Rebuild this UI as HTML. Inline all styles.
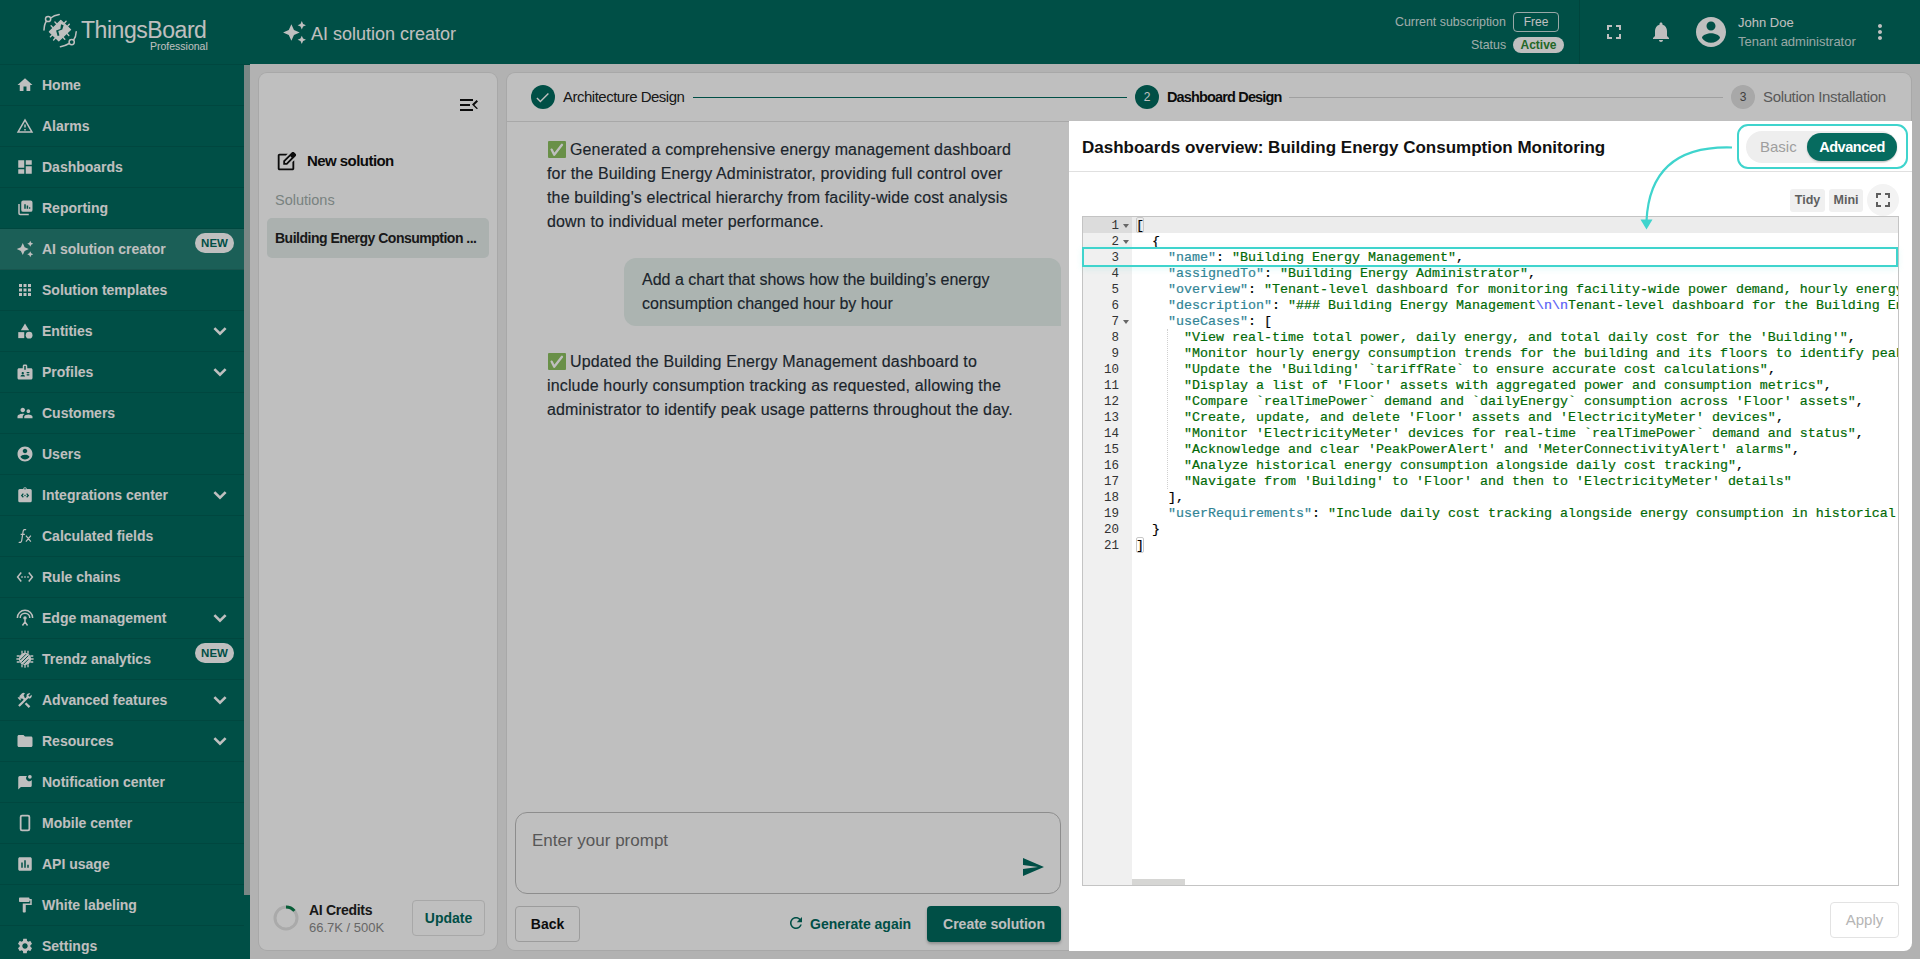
<!DOCTYPE html>
<html><head><meta charset="utf-8">
<style>
*{box-sizing:border-box;margin:0;padding:0}
html,body{width:1920px;height:959px;overflow:hidden}
body{position:relative;background:#eeeeee;font-family:"Liberation Sans",sans-serif;color:rgba(0,0,0,.87)}
.abs{position:absolute}
svg{display:block}
/* header */
#hdr{position:absolute;left:0;top:0;width:1920px;height:64px;background:#016a5e}
#side{position:absolute;left:0;top:64px;width:250px;height:895px;background:#016a5e;border-top:1px solid rgba(0,0,0,.1)}
.nav{position:absolute;left:0;width:244px;height:41px;border-bottom:1px solid rgba(0,0,0,.1);color:#fff}
.nav .ic{position:absolute;left:16px;top:10.5px;width:18px;height:18px}
.nav .tx{position:absolute;left:42px;top:0;line-height:41px;font-size:14px;font-weight:700;white-space:nowrap}
.nav .chev{position:absolute;left:207px;top:7px;width:26px;height:26px}
.nav.act{background:rgba(255,255,255,.14)}
.badge{position:absolute;left:195px;top:4px;width:39px;height:20px;border-radius:10px;background:#fff;color:#016a5e;font-size:11.5px;font-weight:700;text-align:center;line-height:20px}
#sbar{position:absolute;left:244px;top:65px;width:6px;height:830px;background:#a3b5b2}
.msg{font-size:16px;line-height:24px;color:#27313a;-webkit-text-stroke:.15px #27313a;white-space:nowrap;letter-spacing:.15px;margin-top:1px}
.cl{position:absolute;left:4px;margin-top:1px;height:16px;line-height:16px;font-family:"Liberation Mono",monospace;font-size:13.33px;-webkit-text-stroke:.2px;white-space:pre;color:#000}
.ck{color:#318495}.cs{color:#036a07}.ce{color:#585cf6}
.gl{position:absolute;left:0;margin-top:1px;width:36px;height:16px;line-height:16px;font-family:"Liberation Mono",monospace;font-size:12.5px;text-align:right;color:#333}
.fw{position:absolute;left:40px;top:6px;width:0;height:0;border-left:3px solid transparent;border-right:3px solid transparent;border-top:4px solid #666}
.card{position:absolute;background:#fff;box-shadow:0 0 0 1px #e0e0e0;border-radius:8px}
</style></head>
<body>
<div id="hdr">
<svg class="abs" style="left:40px;top:10px;width:40px;height:40px" viewBox="0 0 40 40" fill="none" stroke="#fff" stroke-width="1.5" stroke-linecap="round">
 <path d="M4 20Q4.3 14 6.3 11.2"/><circle cx="8.1" cy="9" r="2.6"/><path d="M10.7 8Q14 5.5 19.2 4.6"/>
 <path d="M36.2 21.7Q36 27 33.6 30"/><circle cx="31.7" cy="32.1" r="2.6"/><path d="M29.2 33.5Q25 36 20.4 36.7"/>
 <path d="M20.8 10.4L30.6 19.6 18.8 30.8 9.4 21.7z" fill="#fff" stroke-width="1.2" stroke-linejoin="round"/>
 <path d="M24.1 13.5l2-2.2M27.3 16.5l2-2.2M13.2 17.9l-2.1-2.1M17 14.2l-2.1-2.1M12.5 24.7l-2.1 2.1M15.7 27.8l-2.1 2.1M22.7 27.1l2.1 2.1M26.7 23.3l2.1 2.1" stroke-width="1.4"/>
 <path d="M21 14.3l2.6 1-1.3 4.3-4 1.5 1.1 4.4-1.8.6-1.5-5.6 4.3-1.6z" fill="#016a5e" stroke="none"/>
</svg>
<span class="abs" style="left:81px;top:14.5px;font-size:23px;letter-spacing:-.45px;color:#fff;white-space:nowrap;line-height:30px">ThingsBoard</span>
<span class="abs" style="left:150px;top:39px;font-size:10.5px;color:#fff;white-space:nowrap;line-height:14px">Professional</span>
<svg class="abs" style="left:282px;top:20px;width:25px;height:25px" viewBox="0 0 24 24" fill="#fff"><path d="M19 9l1.25-2.75L23 5l-2.75-1.25L19 1l-1.25 2.75L15 5l2.75 1.25L19 9zm-7.5.5L9 4 6.5 9.5 1 12l5.5 2.5L9 20l2.5-5.5L17 12l-5.5-2.5zM19 15l-1.25 2.75L15 19l2.75 1.25L19 23l1.25-2.75L23 19l-2.75-1.25L19 15z"/></svg>
<span class="abs" style="left:311px;top:21.5px;font-size:18px;color:#fff;white-space:nowrap;line-height:24px">AI solution creator</span>
<span class="abs" style="left:1395px;top:14.5px;font-size:12.4px;color:rgba(255,255,255,.85);white-space:nowrap;line-height:14px">Current subscription</span>
<span class="abs" style="left:1513px;top:12px;width:46px;height:20px;border:1px solid rgba(255,255,255,.8);border-radius:4px;font-size:12px;color:#fff;text-align:center;line-height:18px">Free</span>
<span class="abs" style="left:1471px;top:37.5px;font-size:12.4px;color:rgba(255,255,255,.85);white-space:nowrap;line-height:14px">Status</span>
<span class="abs" style="left:1513px;top:37px;width:51px;height:16px;background:#fff;border-radius:8px;font-size:12px;font-weight:700;color:#2f8a35;text-align:center;line-height:16px">Active</span>
<div class="abs" style="left:1579px;top:0;width:1px;height:64px;background:rgba(0,0,0,.12)"></div>
<svg class="abs" style="left:1602px;top:20px;width:24px;height:24px" viewBox="0 0 24 24" fill="#fff"><path d="M7 14H5v5h5v-2H7v-3zm-2-4h2V7h3V5H5v5zm12 7h-3v2h5v-5h-2v3zM14 5v2h3v3h2V5h-5z"/></svg>
<svg class="abs" style="left:1649px;top:20px;width:24px;height:24px" viewBox="0 0 24 24" fill="#fff"><path d="M12 22c1.1 0 2-.9 2-2h-4c0 1.1.89 2 2 2zm6-6v-5c0-3.07-1.64-5.64-4.5-6.32V4c0-.83-.67-1.5-1.5-1.5s-1.5.67-1.5 1.5v.68C7.63 5.36 6 7.92 6 11v5l-2 2v1h16v-1l-2-2z"/></svg>
<svg class="abs" style="left:1693px;top:14px;width:36px;height:36px" viewBox="0 0 24 24" fill="#fff"><path d="M12 2C6.48 2 2 6.48 2 12s4.48 10 10 10 10-4.48 10-10S17.52 2 12 2zm0 3c1.66 0 3 1.34 3 3s-1.34 3-3 3-3-1.34-3-3 1.34-3 3-3zm0 14.2c-2.5 0-4.71-1.28-6-3.22.03-1.99 4-3.08 6-3.08 1.99 0 5.97 1.09 6 3.08-1.29 1.94-3.5 3.22-6 3.22z"/></svg>
<span class="abs" style="left:1738px;top:15px;font-size:13px;color:#fff;white-space:nowrap;line-height:16px">John Doe</span>
<span class="abs" style="left:1738px;top:34px;font-size:13px;color:rgba(255,255,255,.8);white-space:nowrap;line-height:16px">Tenant administrator</span>
<svg class="abs" style="left:1868px;top:20px;width:24px;height:24px" viewBox="0 0 24 24" fill="#fff"><path d="M12 8c1.1 0 2-.9 2-2s-.9-2-2-2-2 .9-2 2 .9 2 2 2zm0 2c-1.1 0-2 .9-2 2s.9 2 2 2 2-.9 2-2-.9-2-2-2zm0 6c-1.1 0-2 .9-2 2s.9 2 2 2 2-.9 2-2-.9-2-2-2z"/></svg>
</div>
<div id="side">
<div class="nav" style="top:0px"><svg class="ic" viewBox="0 0 24 24" fill="#fff"><path d="M10 20v-6h4v6h5v-8h3L12 3 2 12h3v8z"/></svg><span class="tx">Home</span></div>
<div class="nav" style="top:41px"><svg class="ic" viewBox="0 0 24 24" fill="#fff"><path d="M12 5.99L19.53 19H4.47L12 5.99M12 2L1 21h22L12 2zm1 14h-2v2h2v-2zm0-6h-2v4h2v-4z"/></svg><span class="tx">Alarms</span></div>
<div class="nav" style="top:82px"><svg class="ic" viewBox="0 0 24 24" fill="#fff"><path d="M3 13h8V3H3v10zm0 8h8v-6H3v6zm10 0h8V11h-8v10zm0-18v6h8V3h-8z"/></svg><span class="tx">Dashboards</span></div>
<div class="nav" style="top:123px"><svg class="ic" viewBox="0 0 24 24" fill="#fff"><path fill-rule="evenodd" d="M9.5 2h10A2.5 2.5 0 0 1 22 4.5v10a2.5 2.5 0 0 1-2.5 2.5h-10A2.5 2.5 0 0 1 7 14.5v-10A2.5 2.5 0 0 1 9.5 2zM11 7v6h2V7zm3.2 1.5V13h2V8.5zm3.2 2.5v2h1.6v-2z"/><path d="M4 6.5V19a1.5 1.5 0 0 0 1.5 1.5H17" fill="none" stroke="#fff" stroke-width="2"/></svg><span class="tx">Reporting</span></div>
<div class="nav act" style="top:164px"><svg class="ic" viewBox="0 0 24 24" fill="#fff"><path d="M19 9l1.25-2.75L23 5l-2.75-1.25L19 1l-1.25 2.75L15 5l2.75 1.25L19 9zm-7.5.5L9 4 6.5 9.5 1 12l5.5 2.5L9 20l2.5-5.5L17 12l-5.5-2.5zM19 15l-1.25 2.75L15 19l2.75 1.25L19 23l1.25-2.75L23 19l-2.75-1.25L19 15z"/></svg><span class="tx">AI solution creator</span><span class="badge">NEW</span></div>
<div class="nav" style="top:205px"><svg class="ic" viewBox="0 0 24 24" fill="#fff"><path d="M4 8h4V4H4v4zm6 12h4v-4h-4v4zm-6 0h4v-4H4v4zm0-6h4v-4H4v4zm6 0h4v-4h-4v4zm6-10v4h4V4h-4zm-6 4h4V4h-4v4zm6 6h4v-4h-4v4zm0 6h4v-4h-4v4z"/></svg><span class="tx">Solution templates</span></div>
<div class="nav" style="top:246px"><svg class="ic" viewBox="0 0 24 24" fill="#fff"><path d="M12 2l-5.5 9h11z"/><circle cx="17.5" cy="17.5" r="4.5"/><path d="M3 13.5h8v8H3z"/></svg><span class="tx">Entities</span><svg class="chev" viewBox="0 0 24 24"><path d="M6.8 9.3L12 14.5l5.2-5.2" fill="none" stroke="#fff" stroke-width="2.4"/></svg></div>
<div class="nav" style="top:287px"><svg class="ic" viewBox="0 0 24 24" fill="#fff"><path d="M20 7h-5V4c0-1.1-.9-2-2-2h-2c-1.1 0-2 .9-2 2v3H4c-1.1 0-2 .9-2 2v11c0 1.1.9 2 2 2h16c1.1 0 2-.9 2-2V9c0-1.1-.9-2-2-2zM9 12c.83 0 1.5.67 1.5 1.5S9.83 15 9 15s-1.5-.67-1.5-1.5S8.17 12 9 12zm3 6H6v-.43c0-.6.36-1.15.92-1.39.64-.28 1.34-.43 2.08-.43s1.44.15 2.08.43c.55.24.92.78.92 1.39V18zm1-9h-2V4h2v5zm4.25 7.5h-2.5c-.41 0-.75-.34-.75-.75s.34-.75.75-.75h2.5c.41 0 .75.34.75.75s-.34.75-.75.75zm0-3h-2.5c-.41 0-.75-.34-.75-.75s.34-.75.75-.75h2.5c.41 0 .75.34.75.75s-.34.75-.75.75z"/></svg><span class="tx">Profiles</span><svg class="chev" viewBox="0 0 24 24"><path d="M6.8 9.3L12 14.5l5.2-5.2" fill="none" stroke="#fff" stroke-width="2.4"/></svg></div>
<div class="nav" style="top:328px"><svg class="ic" viewBox="0 0 24 24" fill="#fff"><path d="M16.5 12c1.38 0 2.49-1.12 2.49-2.5S17.88 7 16.5 7C15.12 7 14 8.12 14 9.5s1.12 2.5 2.5 2.5zM9 11c1.66 0 2.99-1.34 2.99-3S10.66 5 9 5C7.34 5 6 6.34 6 8s1.34 3 3 3zm7.5 3c-1.83 0-5.5.92-5.5 2.75V19h11v-2.25c0-1.83-3.67-2.750-5.5-2.75zM9 13c-2.33 0-7 1.17-7 3.5V19h7v-2.25c0-.85.33-2.34 2.37-3.47C10.5 13.1 9.66 13 9 13z"/></svg><span class="tx">Customers</span></div>
<div class="nav" style="top:369px"><svg class="ic" viewBox="0 0 24 24" fill="#fff"><path d="M12 2C6.48 2 2 6.48 2 12s4.48 10 10 10 10-4.48 10-10S17.52 2 12 2zm0 3c1.66 0 3 1.34 3 3s-1.34 3-3 3-3-1.34-3-3 1.34-3 3-3zm0 14.2c-2.5 0-4.71-1.28-6-3.22.03-1.99 4-3.08 6-3.08 1.99 0 5.97 1.09 6 3.08-1.29 1.94-3.5 3.22-6 3.22z"/></svg><span class="tx">Users</span></div>
<div class="nav" style="top:410px"><svg class="ic" viewBox="0 0 24 24" fill="#fff"><path d="M5 4h4.6a2.4 2.4 0 0 1 4.8 0H19a2 2 0 0 1 2 2v13.5a2 2 0 0 1-2 2H5a2 2 0 0 1-2-2V6a2 2 0 0 1 2-2z"/><path d="M9.8 10.2L7.6 12.6l2.2 2.4M14.2 10.2l2.2 2.4-2.2 2.4" fill="none" stroke="#016a5e" stroke-width="1.7"/><circle cx="12" cy="12.6" r=".9" fill="#016a5e"/><circle cx="12" cy="3.6" r="1" fill="#016a5e"/></svg><span class="tx">Integrations center</span><svg class="chev" viewBox="0 0 24 24"><path d="M6.8 9.3L12 14.5l5.2-5.2" fill="none" stroke="#fff" stroke-width="2.4"/></svg></div>
<div class="nav" style="top:451px"><svg class="ic" viewBox="0 0 24 24" fill="#fff"><path d="M13.5 3.8c-1.6-.9-3.6-.4-4 2L7.6 18.2c-.4 2.4-2.4 2.9-4 2M6.2 9.8h5.6M13.2 11.5l6.6 8M19.8 11.5l-6.6 8" fill="none" stroke="#fff" stroke-width="1.6"/></svg><span class="tx">Calculated fields</span></div>
<div class="nav" style="top:492px"><svg class="ic" viewBox="0 0 24 24" fill="#fff"><path d="M7.77 6.76L6.23 5.48.82 12l5.41 6.52 1.54-1.28L3.42 12l4.35-5.24zM7 13h2v-2H7v2zm10-2h-2v2h2v-2zm-6 2h2v-2h-2v2zm6.77-7.52l-1.54 1.28L20.58 12l-4.35 5.24 1.54 1.28L23.18 12l-5.41-6.52z"/></svg><span class="tx">Rule chains</span></div>
<div class="nav" style="top:533px"><svg class="ic" viewBox="0 0 24 24" fill="#fff"><path d="M1.8 12A10.2 10.2 0 0 1 22.2 12M5.6 12A6.4 6.4 0 0 1 18.4 12M12 13.5V17.2M12 17.2L8.6 22M12 17.2l3.4 4.8" fill="none" stroke="#fff" stroke-width="2"/><circle cx="12" cy="12" r="2.3"/></svg><span class="tx">Edge management</span><svg class="chev" viewBox="0 0 24 24"><path d="M6.8 9.3L12 14.5l5.2-5.2" fill="none" stroke="#fff" stroke-width="2.4"/></svg></div>
<div class="nav" style="top:574px"><svg class="ic" viewBox="0 0 24 24" fill="#fff"><circle cx="12" cy="12" r="8.2"/><path d="M8 1v4M12 .5v4M16 1v4M8 19v4M12 19.5v4M16 19v4M1 8h4M.5 12h4M1 16h4M19 8h4M19.5 12h4M19 16h4" fill="none" stroke="#fff" stroke-width="1.8"/><path d="M5.5 13.5l8-8M7.5 16.5l9-9M10 19l6.5-6.5" fill="none" stroke="#016a5e" stroke-width="1.3"/></svg><span class="tx">Trendz analytics</span><span class="badge">NEW</span></div>
<div class="nav" style="top:615px"><svg class="ic" viewBox="0 0 24 24" fill="#fff"><path d="M13.78 15.17l-2.12 2.12 5.3 5.3 2.12-2.12zM17.5 10c1.93 0 3.5-1.57 3.5-3.5 0-.58-.16-1.12-.41-1.6l-2.7 2.7-1.49-1.49 2.7-2.7c-.48-.25-1.02-.41-1.6-.41C15.57 3 14 4.57 14 6.5c0 .41.08.8.21 1.16l-1.85 1.85-1.78-1.78.71-.71-1.41-1.41L12 3.49a3 3 0 0 0-4.24 0L4.22 7.03l1.41 1.41H2.81l-.71.71 3.54 3.54.71-.71V9.15l1.41 1.41.71-.71 1.78 1.78-7.41 7.41 2.12 2.12L16.34 9.79c.36.13.75.21 1.16.21z"/></svg><span class="tx">Advanced features</span><svg class="chev" viewBox="0 0 24 24"><path d="M6.8 9.3L12 14.5l5.2-5.2" fill="none" stroke="#fff" stroke-width="2.4"/></svg></div>
<div class="nav" style="top:656px"><svg class="ic" viewBox="0 0 24 24" fill="#fff"><path d="M10 4H4c-1.1 0-1.99.9-1.99 2L2 18c0 1.1.9 2 2 2h16c1.1 0 2-.9 2-2V8c0-1.1-.9-2-2-2h-8l-2-2z"/></svg><span class="tx">Resources</span><svg class="chev" viewBox="0 0 24 24"><path d="M6.8 9.3L12 14.5l5.2-5.2" fill="none" stroke="#fff" stroke-width="2.4"/></svg></div>
<div class="nav" style="top:697px"><svg class="ic" viewBox="0 0 24 24" fill="#fff"><path d="M18.5 2.5a2.5 2.5 0 1 1 0 5 2.5 2.5 0 0 1 0-5zM14.6 4H5a2 2 0 0 0-2 2v16l3.5-3.5H19a2 2 0 0 0 2-2V9.4A4 4 0 0 1 14.6 4z"/></svg><span class="tx">Notification center</span></div>
<div class="nav" style="top:738px"><svg class="ic" viewBox="0 0 24 24" fill="#fff"><rect x="6.2" y="2.2" width="11.6" height="19.6" rx="1.8" fill="none" stroke="#fff" stroke-width="2.4"/></svg><span class="tx">Mobile center</span></div>
<div class="nav" style="top:779px"><svg class="ic" viewBox="0 0 24 24" fill="#fff"><path d="M19 3H5c-1.1 0-2 .9-2 2v14c0 1.1.9 2 2 2h14c1.1 0 2-.9 2-2V5c0-1.1-.9-2-2-2zM9 17H7v-7h2v7zm4 0h-2V7h2v10zm4 0h-2v-4h2v4z"/></svg><span class="tx">API usage</span></div>
<div class="nav" style="top:820px"><svg class="ic" viewBox="0 0 24 24" fill="#fff"><path d="M18 4V3c0-.55-.45-1-1-1H5c-.55 0-1 .45-1 1v4c0 .55.45 1 1 1h12c.55 0 1-.45 1-1V6h1v4H9v11c0 .55.45 1 1 1h2c.55 0 1-.45 1-1v-9h8V4h-3z"/></svg><span class="tx">White labeling</span></div>
<div class="nav" style="top:861px"><svg class="ic" viewBox="0 0 24 24" fill="#fff"><path d="M19.14 12.94c.04-.3.06-.61.06-.94 0-.32-.02-.64-.07-.94l2.03-1.58c.18-.14.23-.41.12-.61l-1.92-3.32c-.12-.22-.37-.29-.59-.22l-2.39.96c-.5-.38-1.03-.7-1.62-.94l-.36-2.54c-.04-.24-.24-.41-.48-.41h-3.84c-.24 0-.43.17-.47.41l-.36 2.54c-.59.24-1.13.57-1.62.94l-2.39-.96c-.22-.08-.47 0-.59.22L2.74 8.87c-.12.21-.08.47.12.61l2.03 1.58c-.05.3-.09.63-.09.94s.02.64.07.94l-2.03 1.58c-.18.14-.23.41-.12.61l1.92 3.32c.12.22.37.29.59.22l2.39-.96c.5.38 1.03.7 1.62.94l.36 2.54c.05.24.24.41.48.41h3.84c.24 0 .44-.17.47-.41l.36-2.54c.59-.24 1.13-.56 1.62-.94l2.39.96c.22.08.47 0 .59-.22l1.92-3.32c.12-.22.07-.47-.12-.61l-2.01-1.58zM12 15.6c-1.98 0-3.6-1.62-3.6-3.6s1.62-3.6 3.6-3.6 3.6 1.62 3.6 3.6-1.62 3.6-3.6 3.6z"/></svg><span class="tx">Settings</span></div>
</div>
<div id="sbar"></div>

<div class="card" id="leftcard" style="left:259px;top:73px;width:238px;height:877px">
<svg class="abs" style="left:198px;top:20px;width:24px;height:24px" viewBox="0 0 24 24" fill="#111"><path d="M3 18h13v-2H3v2zm0-5h10v-2H3v2zm0-7v2h13V6H3zm18 9.59L17.42 12 21 8.41 19.59 7 15 11.59 19.59 16 21 15.59z"/></svg>
<svg class="abs" style="left:16px;top:78px;width:22px;height:22px" viewBox="0 0 24 24" fill="#111"><path d="M5 21q-.83 0-1.41-.59T3 19V5q0-.83.59-1.41T5 3h8.92l-2 2H5v14h14v-6.95l2-2V19q0 .83-.59 1.41T19 21H5zm4-6v-4.25l9.18-9.18q.3-.3.68-.45t.75-.15q.4 0 .76.15t.66.45L22.43 3q.28.3.43.66T23 4.4q0 .38-.14.74t-.44.66L13.25 15H9zm2-2h1.4l5.8-5.8-.7-.7-.73-.7L11 11.58V13z"/></svg>
<span class="abs" style="left:48px;top:79px;font-size:15px;font-weight:700;letter-spacing:-.55px;line-height:18px;color:#111;white-space:nowrap">New solution</span>
<span class="abs" style="left:16px;top:118px;font-size:14.5px;line-height:18px;color:#a2aeab;white-space:nowrap">Solutions</span>
<div class="abs" style="left:8px;top:145px;width:222px;height:40px;border-radius:5px;background:#e4ecea"></div>
<span class="abs" style="left:16px;top:156px;font-size:14px;font-weight:700;letter-spacing:-.5px;line-height:18px;color:#222;white-space:nowrap">Building Energy Consumption ...</span>
<svg class="abs" style="left:14px;top:832px;width:26px;height:26px" viewBox="0 0 26 26"><circle cx="13" cy="13" r="11" fill="none" stroke="#e3e3e3" stroke-width="3"/><path d="M13 2a11 11 0 0 1 8.4 3.9" fill="none" stroke="#0a7d4a" stroke-width="3"/></svg>
<span class="abs" style="left:50px;top:829px;font-size:14px;font-weight:700;letter-spacing:-.3px;line-height:16px;color:#222;white-space:nowrap">AI Credits</span>
<span class="abs" style="left:50px;top:847px;font-size:13px;line-height:16px;color:#8a8a8a;white-space:nowrap">66.7K / 500K</span>
<div class="abs" style="left:153px;top:827px;width:73px;height:36px;border:1px solid #e0e0e0;border-radius:4px;font-size:14px;font-weight:700;color:#016a5e;text-align:center;line-height:34px">Update</div>
</div>
<div class="card" id="rightcard" style="left:507px;top:73px;width:1404px;height:877px;overflow:hidden">
<div class="abs" style="left:0;top:0;width:1404px;height:49px;border-bottom:1px solid #e0e0e0"></div>
<div class="abs" style="left:24px;top:12px;width:24px;height:24px;border-radius:50%;background:#016a5e"></div>
<svg class="abs" style="left:27px;top:16px;width:17px;height:17px" viewBox="0 0 24 24" fill="#fff"><path d="M9 16.17L4.83 12l-1.42 1.41L9 19 21 7l-1.41-1.41z"/></svg>
<span class="abs" style="left:56px;top:15px;font-size:15px;letter-spacing:-.5px;line-height:18px;color:#222;white-space:nowrap">Architecture Design</span>
<div class="abs" style="left:186px;top:24px;width:434px;height:1px;background:#016a5e"></div>
<div class="abs" style="left:628px;top:12px;width:24px;height:24px;border-radius:50%;background:#016a5e;color:#fff;font-size:12px;text-align:center;line-height:24px">2</div>
<span class="abs" style="left:660px;top:15px;font-size:14.5px;font-weight:700;letter-spacing:-.85px;line-height:18px;color:#111;white-space:nowrap">Dashboard Design</span>
<div class="abs" style="left:782px;top:24px;width:434px;height:1px;background:#d6d6d6"></div>
<div class="abs" style="left:1224px;top:12px;width:24px;height:24px;border-radius:50%;background:#e0e0e0;color:#555;font-size:12px;text-align:center;line-height:24px">3</div>
<span class="abs" style="left:1256px;top:15px;font-size:15px;letter-spacing:-.35px;line-height:18px;color:#777;white-space:nowrap">Solution Installation</span>

<svg class="abs" style="left:41px;top:68px;width:18px;height:17px" viewBox="0 0 18 17"><rect width="18" height="17" rx="1" fill="#8cc061"/><path d="M3.6 8.6l2.6 5.2 7.8-10" fill="none" stroke="#fff" stroke-width="2.3" stroke-linecap="round" stroke-linejoin="round"/></svg>
<div class="abs msg" style="left:40px;top:64px;width:480px">&nbsp;&nbsp;&nbsp;&nbsp;&nbsp;Generated a comprehensive energy management dashboard<br>for the Building Energy Administrator, providing full control over<br>the building's electrical hierarchy from facility-wide cost analysis<br>down to individual meter performance.</div>
<div class="abs" style="left:117px;top:185px;width:437px;height:68px;border-radius:12px 12px 0 12px;background:#e6f0ed"></div>
<div class="abs msg" style="left:135px;top:194px;width:420px;letter-spacing:0">Add a chart that shows how the building’s energy<br>consumption changed hour by hour</div>
<svg class="abs" style="left:41px;top:280px;width:18px;height:17px" viewBox="0 0 18 17"><rect width="18" height="17" rx="1" fill="#8cc061"/><path d="M3.6 8.6l2.6 5.2 7.8-10" fill="none" stroke="#fff" stroke-width="2.3" stroke-linecap="round" stroke-linejoin="round"/></svg>
<div class="abs msg" style="left:40px;top:276px;width:500px">&nbsp;&nbsp;&nbsp;&nbsp;&nbsp;Updated the Building Energy Management dashboard to<br>include hourly consumption tracking as requested, allowing the<br>administrator to identify peak usage patterns throughout the day.</div>

<div class="abs" style="left:8px;top:739px;width:546px;height:82px;border:1px solid #bdbdbd;border-radius:12px"></div>
<span class="abs" style="left:25px;top:758px;font-size:17px;line-height:20px;color:#757575;white-space:nowrap">Enter your prompt</span>
<svg class="abs" style="left:514px;top:782px;width:24px;height:24px" viewBox="0 0 24 24" fill="#016a5e"><path d="M2.01 21L23 12 2.01 3 2 10l15 2-15 2z"/></svg>
<div class="abs" style="left:8px;top:833px;width:65px;height:36px;border:1px solid #d0d0d0;border-radius:4px;font-size:14px;font-weight:700;color:#111;text-align:center;line-height:34px">Back</div>
<svg class="abs" style="left:280px;top:841px;width:18px;height:18px" viewBox="0 0 24 24" fill="#016a5e"><path d="M17.65 6.35C16.2 4.9 14.21 4 12 4c-4.42 0-7.99 3.58-7.99 8s3.57 8 7.99 8c3.73 0 6.84-2.55 7.73-6h-2.08c-.82 2.33-3.04 4-5.65 4-3.31 0-6-2.69-6-6s2.69-6 6-6c1.66 0 3.14.69 4.22 1.78L13 11h7V4l-2.35 2.35z"/></svg>
<span class="abs" style="left:303px;top:842px;font-size:14px;font-weight:700;line-height:18px;color:#016a5e;white-space:nowrap">Generate again</span>
<div class="abs" style="left:420px;top:833px;width:134px;height:36px;border-radius:4px;background:#016a5e;box-shadow:0 2px 3px rgba(0,0,0,.25);font-size:14px;font-weight:700;color:#fff;text-align:center;line-height:36px">Create solution</div>
</div>

<div class="abs" id="rpanel" style="left:1069px;top:121px;width:843px;height:830px;background:#fff;border-radius:0 0 8px 0;overflow:hidden">
<span class="abs" style="left:13px;top:17px;font-size:17px;font-weight:700;line-height:20px;color:#111;white-space:nowrap">Dashboards overview: Building Energy Consumption Monitoring</span>
<div class="abs" style="left:677px;top:10px;width:151px;height:32px;border-radius:16px;background:#eeeeee"></div>
<span class="abs" style="left:691px;top:17px;font-size:15px;line-height:18px;color:#9e9e9e;white-space:nowrap">Basic</span>
<div class="abs" style="left:738px;top:12px;width:90px;height:28px;border-radius:14px;background:#066b5f;box-shadow:0 1px 2px rgba(0,0,0,.2);font-size:14.5px;font-weight:700;color:#fff;text-align:center;line-height:28px;letter-spacing:-.45px">Advanced</div>
<div class="abs" style="left:0;top:50px;width:843px;height:1px;background:#e0e0e0"></div>
<div class="abs" style="left:721px;top:68px;width:35px;height:23px;border-radius:3px;background:#f0f0f0;font-size:12.5px;font-weight:700;color:#5f5f5f;text-align:center;line-height:23px">Tidy</div>
<div class="abs" style="left:760px;top:68px;width:34px;height:23px;border-radius:3px;background:#f0f0f0;font-size:12.5px;font-weight:700;color:#5f5f5f;text-align:center;line-height:23px">Mini</div>
<div class="abs" style="left:798px;top:63px;width:32px;height:32px;border-radius:50%;background:#f3f3f3"></div>
<svg class="abs" style="left:802px;top:67px;width:24px;height:24px" viewBox="0 0 24 24" fill="#5f5f5f"><path d="M7 14H5v5h5v-2H7v-3zm-2-4h2V7h3V5H5v5zm12 7h-3v2h5v-5h-2v3zM14 5v2h3v3h2V5h-5z"/></svg>
<div class="abs" id="editor" style="left:13px;top:95px;width:817px;height:670px;border:1px solid #c4c4c4;overflow:hidden">
 <div class="abs" style="left:0;top:0;width:49px;height:668px;background:#f0f0f0"></div>
 <div class="abs" style="left:0;top:0;width:49px;height:16px;background:#dcdcdc"></div>
 <div class="abs" style="left:49px;top:0;width:770px;height:16px;background:#ececec"></div>
 <div class="abs" style="left:52.5px;top:0;width:8px;height:16px;border:1px solid #c8c8c8;border-radius:2px"></div><div class="abs" style="left:52.5px;top:320px;width:8px;height:16px;border:1px solid #c8c8c8;border-radius:2px;z-index:2"></div>
 <div class="abs" style="left:84px;top:112px;width:0;height:160px;border-left:1px dotted #d0d0d0"></div>
 <div class="gl" style="top:0px">1<span class="fw"></span></div><div class="gl" style="top:16px">2<span class="fw"></span></div><div class="gl" style="top:32px">3</div><div class="gl" style="top:48px">4</div><div class="gl" style="top:64px">5</div><div class="gl" style="top:80px">6</div><div class="gl" style="top:96px">7<span class="fw"></span></div><div class="gl" style="top:112px">8</div><div class="gl" style="top:128px">9</div><div class="gl" style="top:144px">10</div><div class="gl" style="top:160px">11</div><div class="gl" style="top:176px">12</div><div class="gl" style="top:192px">13</div><div class="gl" style="top:208px">14</div><div class="gl" style="top:224px">15</div><div class="gl" style="top:240px">16</div><div class="gl" style="top:256px">17</div><div class="gl" style="top:272px">18</div><div class="gl" style="top:288px">19</div><div class="gl" style="top:304px">20</div><div class="gl" style="top:320px">21</div>
 <div class="abs" style="left:49px;top:0;width:768px;height:400px;overflow:hidden"><div class="cl" style="top:0px">[</div><div class="cl" style="top:16px">  {</div><div class="cl" style="top:32px">    <span class="ck">"name"</span>: <span class="cs">"Building Energy Management"</span>,</div><div class="cl" style="top:48px">    <span class="ck">"assignedTo"</span>: <span class="cs">"Building Energy Administrator"</span>,</div><div class="cl" style="top:64px">    <span class="ck">"overview"</span>: <span class="cs">"Tenant-level dashboard for monitoring facility-wide power demand, hourly energy consumption, and daily costs"</span>,</div><div class="cl" style="top:80px">    <span class="ck">"description"</span>: <span class="cs">"### Building Energy Management</span><span class="ce">\n\n</span><span class="cs">Tenant-level dashboard for the Building Energy Administrator"</span>,</div><div class="cl" style="top:96px">    <span class="ck">"useCases"</span>: [</div><div class="cl" style="top:112px">      <span class="cs">"View real-time total power, daily energy, and total daily cost for the 'Building'"</span>,</div><div class="cl" style="top:128px">      <span class="cs">"Monitor hourly energy consumption trends for the building and its floors to identify peak usage"</span>,</div><div class="cl" style="top:144px">      <span class="cs">"Update the 'Building' `tariffRate` to ensure accurate cost calculations"</span>,</div><div class="cl" style="top:160px">      <span class="cs">"Display a list of 'Floor' assets with aggregated power and consumption metrics"</span>,</div><div class="cl" style="top:176px">      <span class="cs">"Compare `realTimePower` demand and `dailyEnergy` consumption across 'Floor' assets"</span>,</div><div class="cl" style="top:192px">      <span class="cs">"Create, update, and delete 'Floor' assets and 'ElectricityMeter' devices"</span>,</div><div class="cl" style="top:208px">      <span class="cs">"Monitor 'ElectricityMeter' devices for real-time `realTimePower` demand and status"</span>,</div><div class="cl" style="top:224px">      <span class="cs">"Acknowledge and clear 'PeakPowerAlert' and 'MeterConnectivityAlert' alarms"</span>,</div><div class="cl" style="top:240px">      <span class="cs">"Analyze historical energy consumption alongside daily cost tracking"</span>,</div><div class="cl" style="top:256px">      <span class="cs">"Navigate from 'Building' to 'Floor' and then to 'ElectricityMeter' details"</span></div><div class="cl" style="top:272px">    ],</div><div class="cl" style="top:288px">    <span class="ck">"userRequirements"</span>: <span class="cs">"Include daily cost tracking alongside energy consumption in historical views"</span></div><div class="cl" style="top:304px">  }</div><div class="cl" style="top:320px">]</div></div>
 <div class="abs" style="left:49px;top:662px;width:53px;height:6px;background:#d6d6d4"></div>
</div>
<div class="abs" style="left:761px;top:781px;width:69px;height:36px;border:1px solid #e3e3e3;border-radius:4px;font-size:15px;color:#b5b5b5;text-align:center;line-height:34px">Apply</div>
</div>
<!-- tour highlights -->
<div class="abs" style="left:1737px;top:124px;width:171px;height:45px;border:2.3px solid #3fd4cd;border-radius:11px;z-index:60"></div>
<div class="abs" style="left:1082px;top:247px;width:816px;height:20px;border:2.3px solid #3fd4cd;z-index:60;box-shadow:0 2px 6px rgba(63,212,205,.15)"></div>
<svg class="abs" style="left:0;top:0;width:1920px;height:959px;z-index:61;pointer-events:none" viewBox="0 0 1920 959"><path d="M1732 147.5Q1650 145 1646.5 221" fill="none" stroke="#3fd4cd" stroke-width="2.2"/><path d="M1640.5 219.5h12l-6 10z" fill="#3fd4cd"/></svg>
<!-- overlay hole -->
<div class="abs" style="left:1069px;top:121px;width:843px;height:830px;box-shadow:0 0 0 4000px rgba(0,0,0,.25);border-radius:0 0 8px 0;pointer-events:none;z-index:50"></div>
</body></html>
